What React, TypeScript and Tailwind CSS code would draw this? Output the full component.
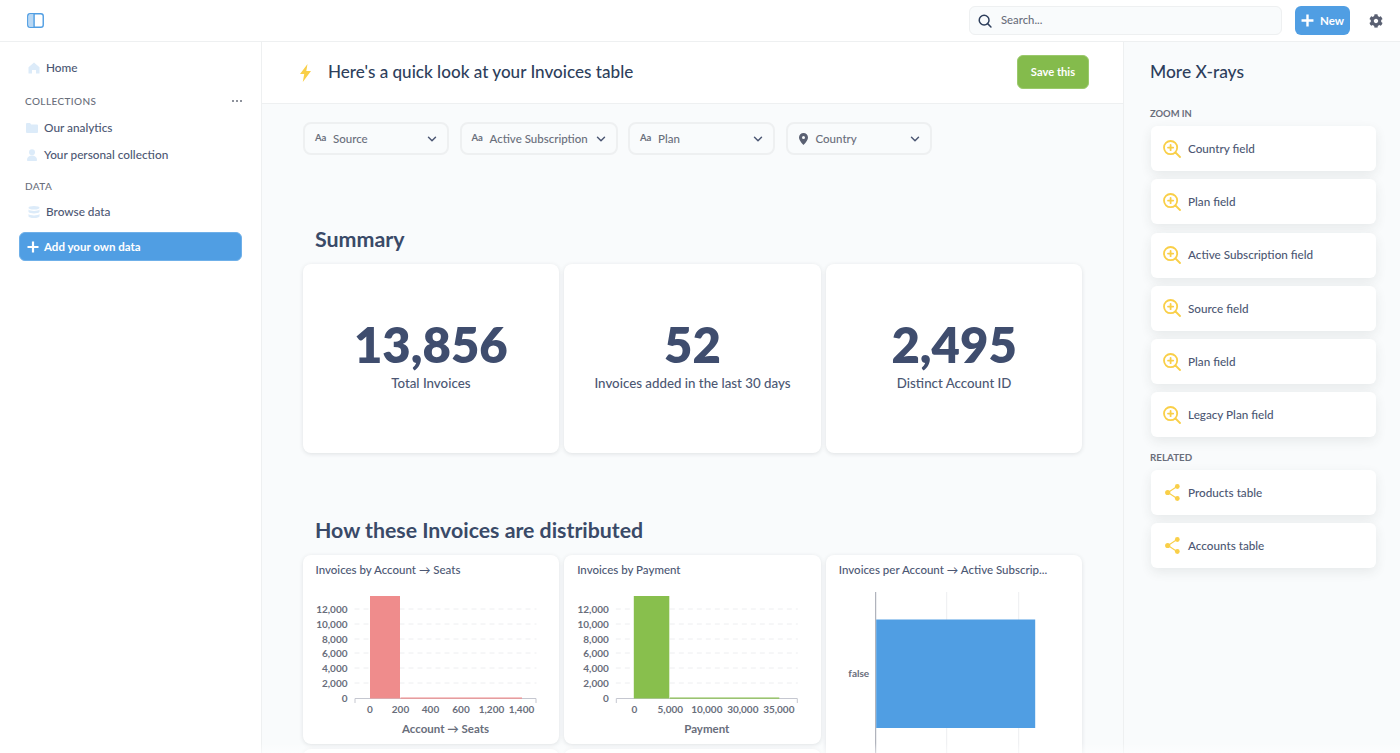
import { ChevronDown } from "lucide-react";
import { FaCog } from "react-icons/fa";

const FONT = "font-['Lato','Open_Sans',sans-serif]";

const filters = [
  { label: "Source", width: "w-[146px]", icon: "Aa" },
  { label: "Active Subscription", width: "w-[158px]", icon: "Aa" },
  { label: "Plan", width: "w-[147px]", icon: "Aa" },
  { label: "Country", width: "w-[146px]", icon: "pin" },
];

const zoomItems = [
  "Country field",
  "Plan field",
  "Active Subscription field",
  "Source field",
  "Plan field",
  "Legacy Plan field",
];

const relatedItems = ["Products table", "Accounts table"];

const stats = [
  { value: "13,856", label: "Total Invoices" },
  { value: "52", label: "Invoices added in the last 30 days" },
  { value: "2,495", label: "Distinct Account ID" },
];

const gridYs = [609, 624, 639, 653, 668, 683];
const yLabels = ["12,000", "10,000", "8,000", "6,000", "4,000", "2,000", "0"];
const yLabelYs = [609, 624, 639, 653, 668, 683, 698];

const SidebarToggle = () => (
  <svg width="17" height="15" viewBox="0 0 18 16" fill="none">
    <rect x="0.75" y="0.75" width="16.5" height="14.5" rx="2.5" fill="#fff" stroke="#509ee3" strokeWidth="1.5" />
    <path d="M2 1.5h5.5v13H2z" fill="#b9d8f4" />
    <path d="M7.5 1v14" stroke="#509ee3" strokeWidth="1.5" />
  </svg>
);

const SearchIcon = () => (
  <svg width="14" height="14" viewBox="0 0 16 16" fill="none" stroke="#2e3f5c" strokeWidth="1.7">
    <circle cx="7" cy="7" r="5.6" />
    <path d="M11 11l3.8 3.8" strokeLinecap="round" />
  </svg>
);

const PlusIcon = ({ size = 13 }: { size?: number }) => (
  <svg width={size} height={size} viewBox="0 0 12 12" fill="none" stroke="#fff" strokeWidth="2.2">
    <path d="M6 0.5v11M0.5 6h11" />
  </svg>
);

const HomeIcon = () => (
  <svg width="12" height="12" viewBox="0 0 12 12" fill="#dcebf9">
    <path d="M6 0.5L11.5 5.2V11.5H8V8H4V11.5H0.5V5.2z" />
  </svg>
);

const FolderIcon = () => (
  <svg width="12" height="10" viewBox="0 0 12 10" fill="#dcebf9">
    <path d="M0 1a1 1 0 011-1h3l1.2 1.4H11a1 1 0 011 1V9a1 1 0 01-1 1H1a1 1 0 01-1-1z" />
  </svg>
);

const PersonIcon = () => (
  <svg width="10" height="12" viewBox="0 0 10 12" fill="#dcebf9">
    <circle cx="5" cy="3.2" r="3" />
    <path d="M0 11c0-3 2.2-4.5 5-4.5S10 8 10 11c0 .6-.5 1-1 1H1c-.5 0-1-.4-1-1z" />
  </svg>
);

const DatabaseIcon = () => (
  <svg width="12" height="12" viewBox="0 0 12 12" fill="#dcebf9">
    <ellipse cx="6" cy="1.8" rx="5.5" ry="1.8" />
    <path d="M.5 3.6c1 1 3 1.4 5.5 1.4s4.500-.4 5.500-1.400V6c-1 1-3 1.400-5.500 1.400S1.500 7 .5 6z" />
    <path d="M.5 8c1 1 3 1.400 5.500 1.400S10.500 9 11.500 8v2.200C11.500 11.200 9 12 6 12S.5 11.200.5 10.200z" />
  </svg>
);

const BoltIcon = () => (
  <svg width="11" height="18" viewBox="0 0 11 18" fill="#f9cf48">
    <path d="M7.500 0L0 10h4.200L2.800 18 11 7H6.300z" />
  </svg>
);

const PinIcon = () => (
  <svg width="9" height="12" viewBox="0 0 9 12" fill="#5a6072" className="ml-px">
    <path fillRule="evenodd" d="M4.500 0A4.500 4.500 0 019 4.500C9 7.500 4.500 12 4.500 12S0 7.500 0 4.500A4.500 4.500 0 014.500 0zm0 3a1.500 1.500 0 100 3 1.500 1.500 0 000-3z" />
  </svg>
);

const ZoomInIcon = () => (
  <svg width="18" height="18" viewBox="0 0 18 18" fill="none" stroke="#f9cf48" strokeWidth="1.800">
    <circle cx="7.600" cy="7.600" r="6.600" />
    <path d="M12.500 12.500l4.500 4.500" strokeLinecap="round" />
    <path d="M7.600 5v5.200M5 7.600h5.200" strokeLinecap="round" />
  </svg>
);

const ConnectionsIcon = () => (
  <svg width="15" height="17" viewBox="0 0 15 17" fill="#f9cf48">
    <path d="M12 2.500L3 8.500l9 6" fill="none" stroke="#f9cf48" strokeWidth="1.100" />
    <circle cx="12.300" cy="2.500" r="2.400" />
    <circle cx="2.700" cy="8.500" r="2.600" />
    <circle cx="12.300" cy="14.500" r="2.400" />
  </svg>
);

const NavItem = ({ icon, label, iconBox }: { icon: React.ReactNode; label: string; iconBox: string }) => (
  <div className="flex items-center h-[27px] text-[11.800px] font-medium text-[#4c5773]">
    <div className={`flex items-center justify-center shrink-0 ${iconBox}`}>{icon}</div>
    <span>{label}</span>
  </div>
);

const FilterButton = ({ label, width, icon }: { label: string; width: string; icon: string }) => (
  <div className={`flex items-center h-[33px] pl-[10px] pr-[8px] border-2 border-[#eef0f1] rounded-lg text-[11.500px] font-medium text-[#696e7b] ${width}`}>
    <div className="w-[15px] shrink-0 text-[9.500px] font-bold text-[#696e7b]">
      {icon === "pin" ? <PinIcon /> : "Aa"}
    </div>
    <span className="ml-[3px] whitespace-nowrap">{label}</span>
    <ChevronDown size={14} strokeWidth={2.500} className="ml-auto shrink-0 text-[#4c5773]" />
  </div>
);

const SideCard = ({ icon, label }: { icon: React.ReactNode; label: string }) => (
  <div className="flex items-center h-[45px] bg-white rounded-md shadow-[0_4px_12px_rgba(46,53,59,0.09)] text-[11.700px] font-medium text-[#4c5773]">
    <div className="flex items-center justify-center w-[32px] ml-[5px] shrink-0">{icon}</div>
    <span>{label}</span>
  </div>
);

const Card = ({ children, className = "" }: { children?: React.ReactNode; className?: string }) => (
  <div className={`bg-white rounded-lg shadow-[0_1px_4px_rgba(46,53,59,0.13)] overflow-hidden ${className}`}>
    {children}
  </div>
);

const ChartTitle = ({ children }: { children: React.ReactNode }) => (
  <div className="h-[30px] pl-[13px] pt-[6px] text-[11.500px] leading-[18px] font-medium text-[#4c5773] whitespace-nowrap">
    {children}
  </div>
);

const Histogram = ({
  minX,
  axis,
  bar,
  color,
  xLabels,
  title,
  titleX,
  labelRight,
}: {
  minX: number;
  axis: [number, number];
  bar: [number, number];
  color: string;
  xLabels: [string, number][];
  title: string;
  titleX: number;
  labelRight: number;
}) => (
  <svg viewBox={`${minX} 585 257 159`} width="257" height="159" className="block" fontFamily="Lato, sans-serif" fill="#696e7b">
    {gridYs.map((y) => (
      <line key={y} x1={axis[0]} x2={axis[1]} y1={y} y2={y} stroke="#edeef0" strokeDasharray="5 4" />
    ))}
    {yLabels.map((l, i) => (
      <text key={l} x={labelRight} y={yLabelYs[i] + 4} textAnchor="end" fontSize="10" fontWeight="700">
        {l}
      </text>
    ))}
    <path d={`M${axis[0] + 0.500} 703V698.500H${axis[1] - 0.500}V703`} fill="none" stroke="#c5c7d0" />
    <rect x={bar[0]} y="596" width={bar[1] - bar[0]} height="102.500" fill={color} />
    <rect x={bar[1] + 0.500} y="697.500" width={xLabels[xLabels.length - 1][1] - bar[1]} height="1.200" fill={color} />
    {xLabels.map(([l, x]) => (
      <text key={l} x={x} y="713" textAnchor="middle" fontSize="10" fontWeight="700">
        {l}
      </text>
    ))}
    <text x={titleX} y="733" textAnchor="middle" fontSize="11.500" fontWeight="700">
      {title}
    </text>
  </svg>
);

const RowChart = () => (
  <svg viewBox="825.800 585 257 168" width="257" height="168" className="block" fontFamily="Lato, sans-serif" fill="#696e7b">
    <line x1="946.500" x2="946.500" y1="592" y2="753" stroke="#edeef0" />
    <line x1="1018.500" x2="1018.500" y1="592" y2="753" stroke="#edeef0" />
    <line x1="875.500" x2="875.500" y1="592" y2="753" stroke="#9ea2ad" />
    <rect x="876" y="619.500" width="159" height="108.500" fill="#509ee3" />
    <text x="869" y="677" textAnchor="end" fontSize="10" fontWeight="700">
      false
    </text>
  </svg>
);

export default function App() {
  return (
    <div className={`${FONT} relative w-[1400px] h-[753px] overflow-hidden flex flex-col bg-white`}>
      {/* top bar */}
      <header className="flex items-center h-[42px] shrink-0 border-b border-[#eef0f1] pl-[27px] pr-[17px]">
        <SidebarToggle />
        <div className="ml-auto flex items-center h-[29px] w-[313px] pl-[8px] bg-[#f9fbfc] border border-[#eef0f1] rounded-md">
          <SearchIcon />
          <span className="ml-[9px] text-[11.300px] font-medium text-[#696e7b]">Search...</span>
        </div>
        <div className="ml-[13px] flex items-center justify-center gap-[6px] w-[55px] h-[29px] bg-[#509ee3] rounded-md text-white text-[11.500px] font-bold">
          <PlusIcon />
          <span>New</span>
        </div>
        <FaCog size={14} className="ml-[19px] text-[#5a6072]" />
      </header>

      <div className="flex flex-1 min-h-0">
        {/* left sidebar */}
        <aside className="w-[262px] shrink-0 border-r border-[#eef0f1] pt-[12px] pl-[19px] pr-[20px]">
          <NavItem icon={<HomeIcon />} label="Home" iconBox="w-[25px] ml-[2px]" />
          <div className="flex items-center justify-between mt-[10px] ml-[6px] mr-[-1px] h-[20px] text-[10px] font-medium tracking-[0.4px] text-[#696e7b]">
            <span>COLLECTIONS</span>
            <span className="flex gap-[2px]">
              <i className="w-[2px] h-[2px] rounded-full bg-[#696e7b]" />
              <i className="w-[2px] h-[2px] rounded-full bg-[#696e7b]" />
              <i className="w-[2px] h-[2px] rounded-full bg-[#696e7b]" />
            </span>
          </div>
          <div className="mt-[3px]">
            <NavItem icon={<FolderIcon />} label="Our analytics" iconBox="w-[25px]" />
            <NavItem icon={<PersonIcon />} label="Your personal collection" iconBox="w-[25px]" />
          </div>
          <div className="flex items-center mt-[8px] ml-[6px] h-[20px] text-[10px] font-medium tracking-[0.4px] text-[#696e7b]">
            DATA
          </div>
          <div className="mt-[2px]">
            <NavItem icon={<DatabaseIcon />} label="Browse data" iconBox="w-[25px] ml-[2px]" />
          </div>
          <div className="mt-[7px] flex items-center h-[29px] pl-[7px] gap-[5px] w-[223px] bg-[#509ee3] border border-[#6fb0e9] rounded-md text-white text-[11.500px] font-bold">
            <PlusIcon size={12} />
            <span>Add your own data</span>
          </div>
        </aside>

        {/* main */}
        <main className="flex-1 min-w-0 flex flex-col bg-[#f9fbfc] overflow-hidden">
          <div className="flex items-center h-[62px] shrink-0 bg-white border-b border-[#eef0f1] pl-[38px] pr-[34px]">
            <BoltIcon />
            <h1 className="ml-[17px] -mt-px text-[17.100px] font-medium text-[#2e3f5c]">Here's a quick look at your Invoices table</h1>
            <div className="ml-auto -mt-[1px] flex items-center justify-center w-[72px] h-[34px] bg-[#84bb4c] border border-[#9bc96c] rounded-md text-white text-[11.200px] font-bold">
              Save this
            </div>
          </div>

          <div className="pl-[40.500px] w-[821px]">
            <div className="flex gap-[10.500px] mt-[18px] ml-[0.500px]">
              {filters.map((f) => (
                <FilterButton key={f.label} {...f} />
              ))}
            </div>

            <h2 className="mt-[69px] ml-[12.500px] h-[30px] text-[21.400px] leading-[30px] font-bold text-[#3a4a68]">Summary</h2>
            <div className="grid grid-cols-3 gap-[5px] w-[780px] mt-[10px]">
              {stats.map((s) => (
                <Card key={s.label} className="h-[189px] flex flex-col items-center pt-[51px]">
                  <div className="text-[49px] leading-[59px] font-extrabold text-[#3f4d6e]">{s.value}</div>
                  <div className="text-[13.300px] leading-[18px] font-medium text-[#4c5773]">{s.label}</div>
                </Card>
              ))}
            </div>

            <h2 className="mt-[62px] ml-[12.500px] h-[30px] text-[21.300px] leading-[30px] font-bold text-[#3a4a68]">
              How these Invoices are distributed
            </h2>
            <div className="grid grid-cols-3 gap-[5px] w-[780px] mt-[10px]">
              <Card className="h-[189px]">
                <ChartTitle>Invoices by Account → Seats</ChartTitle>
                <Histogram
                  minX={302.500}
                  axis={[354, 536]}
                  bar={[369.500, 399.500]}
                  color="#ef8c8c"
                  xLabels={[["0", 369.500], ["200", 400], ["400", 430], ["600", 460.500], ["1,200", 491], ["1,400", 521]]}
                  title="Account → Seats"
                  titleX={445}
                  labelRight={347}
                />
              </Card>
              <Card className="h-[189px]">
                <ChartTitle>Invoices by Payment</ChartTitle>
                <Histogram
                  minX={564.200}
                  axis={[616, 798]}
                  bar={[634, 669.500]}
                  color="#88bf4d"
                  xLabels={[["0", 634.500], ["5,000", 670.500], ["10,000", 707], ["30,000", 743], ["35,000", 779]]}
                  title="Payment"
                  titleX={707}
                  labelRight={609}
                />
              </Card>
              <Card className="row-span-2 h-[220px]">
                <ChartTitle>Invoices per Account → Active Subscrip...</ChartTitle>
                <RowChart />
              </Card>
              <Card className="h-[30px]" />
              <Card className="h-[30px]" />
            </div>
          </div>
        </main>

        {/* right panel */}
        <aside className="w-[277px] shrink-0 bg-[#f9fbfc] border-l border-[#eef0f1] pl-[27px] pr-[24px]">
          <h3 className="mt-[18px] -ml-px h-[24px] text-[17.400px] leading-[24px] font-medium text-[#2e3f5c]">More X-rays</h3>
          <div className="mt-[24px] -ml-px h-[12px] text-[9.400px] leading-[12px] font-bold text-[#696e7b]">ZOOM IN</div>
          <div className="mt-[6px] flex flex-col gap-[8.300px]">
            {zoomItems.map((item, i) => (
              <SideCard key={i} icon={<ZoomInIcon />} label={item} />
            ))}
          </div>
          <div className="mt-[13.500px] -ml-px h-[12px] text-[9.800px] leading-[12px] font-bold text-[#696e7b]">RELATED</div>
          <div className="mt-[7px] flex flex-col gap-[7.800px]">
            {relatedItems.map((item) => (
              <SideCard key={item} icon={<ConnectionsIcon />} label={item} />
            ))}
          </div>
        </aside>
      </div>

      {/* soft fade over the cut-off bottom edge */}
      <div className="absolute inset-x-0 bottom-0 h-[10px] bg-gradient-to-t from-white/50 to-transparent" />
    </div>
  );
}
